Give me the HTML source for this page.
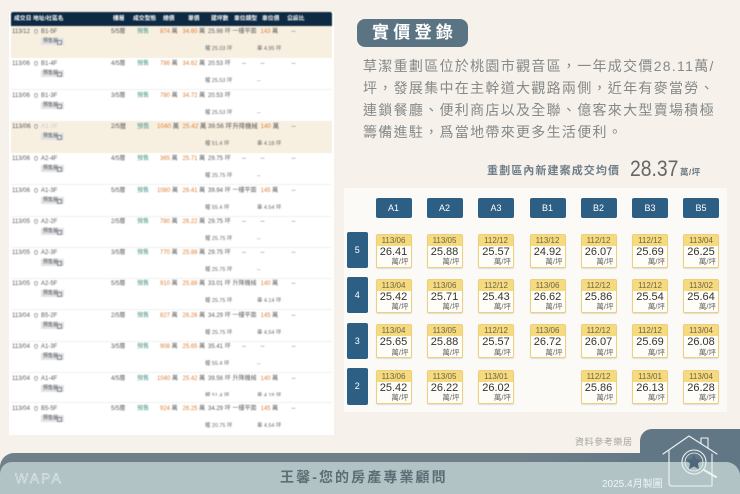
<!DOCTYPE html>
<html lang="zh-Hant"><head><meta charset="utf-8"><title>實價登錄</title>
<style>
*{margin:0;padding:0;box-sizing:border-box}
html,body{width:740px;height:494px;overflow:hidden;background:#f6f1ea;font-family:"Liberation Sans","Noto Sans CJK TC",sans-serif}
#p{position:relative;width:740px;height:494px;overflow:hidden}
#p div,#p span{position:absolute;white-space:nowrap}
.tw{left:9px;top:12px;width:325px;height:423px;background:#fff;filter:blur(.35px)}
.tb{left:11px;top:12px;width:321px;height:423px;overflow:hidden;filter:blur(.4px)}
.h{left:0;top:0;width:321px;height:14px;background:#0e2a42;border-radius:2px 2px 0 0;color:#fff;font-size:5.8px;font-weight:bold;line-height:14px}
.r{left:0;width:321px;height:32px;color:#5c5c5c;font-size:6px;line-height:8px;border-bottom:1px solid #f0f0f0}
.b{background:#f7efe0;border-bottom:0}
.r span{top:2px}
.o{color:#dd8038}.g{color:#4f9a90}
#p .t{left:30px;top:12px!important;width:23px;height:6.5px;background:#dfe2e6;color:#555;font-size:5px;line-height:6.500px;padding-left:2px}
.t:after{content:"";position:absolute;right:2px;top:1.500px;width:3px;height:3px;border:.5px solid #888}
.s{top:19px!important;font-size:5.4px;color:#6c6c6c}
.d{left:1px}.n{left:30px}.f{left:100px}.k{left:126px}.u{left:149px}.u4{left:146px!important}.v{left:171.500px}.a{left:197px}.y{left:221.500px}.q{left:249.500px}.x{left:280.500px}.sa{left:194px}.sb{left:246px}.dash{left:231px!important}
.pin{left:23px;top:3px!important;width:4px;height:5px;border:1px solid #aaa;border-radius:50% 50% 50% 50%/40% 40% 60% 60%}
.pill{left:357px;top:19px;width:111px;height:28px;background:#5b7484;border-radius:8px;color:#fff;font-size:17px;font-weight:bold;line-height:28px;letter-spacing:4.300px;padding-left:15px}
.para{left:363px;top:55px;width:360px;color:#85898a;font-size:14px;line-height:22px;letter-spacing:1.300px}
.para span{position:static!important;display:block}
.st{left:487px;top:164px;font-size:11px;font-weight:bold;color:#6e7d88;letter-spacing:1.100px;line-height:14px}
.pr{left:630px;top:155px;font-size:22px;color:#666;line-height:28px;transform:scaleX(.88);transform-origin:left center}
.un{left:680px;top:166px;font-size:8.500px;font-weight:bold;color:#6e7d88;line-height:12px;letter-spacing:.4px}
.gp{left:344px;top:188px;width:383px;height:224px;background:#fbfaf7}
.ch{top:198px;width:36px;height:20px;background:#2d5f85;border-radius:2px;color:#fff;font-size:9px;line-height:20px;text-align:center}
.rh{left:347px;width:20.500px;background:#2d5f85;border-radius:2px;color:#fff;font-size:9px;text-align:center}
.c{width:36px;height:34px;background:#fffdf8;border:1px solid #edcf80;border-radius:2px;box-shadow:0 1px 1px #ddd}
.c i{position:absolute;left:0;top:0;width:34px;height:11px;background:#f6da7e;font-style:normal;font-size:8px;line-height:11px;text-align:center;color:#6b644a}
.c b{position:absolute;left:0;top:11px;width:34px;font-weight:normal;font-size:11px;line-height:13px;text-align:center;color:#333}
.c u{position:absolute;right:2px;top:22.500px;text-decoration:none;font-size:7.500px;line-height:9px;color:#666}
.src{left:575px;top:436px;font-size:9px;color:#a5a5a3;letter-spacing:.6px;line-height:12px}
.tab{left:640px;top:429px;width:100px;height:40px;background:#627786;border-radius:12px 0 0 0}
.bar{left:0;top:453px;width:740px;height:41px;background:linear-gradient(90deg,#708089,#708089 70%,#627786 87%);border-radius:14px 0 0 0}
.lt{left:0;top:462px;width:740px;height:32px;background:#b2c3c6;border-radius:12px 14px 0 0}
.ft{left:280px;top:468px;font-size:14px;font-weight:bold;color:#5e6c74;letter-spacing:2.100px;line-height:18px}
.wp{left:15px;top:470px;font-size:14px;color:#b2c3c6;-webkit-text-stroke:.4px #eef3f3;letter-spacing:2px;line-height:17px}
.dt{left:602px;top:478px;font-size:10px;color:#f1f5f5;line-height:13px}
svg{position:absolute;left:655px;top:430px}
</style></head><body><div id="p">
<div class="tw"></div>
<div class="tb">
<div class="h"><span style="left:3px">成交日</span><span style="left:22px">地址/社區名</span><span style="left:102px">樓層</span><span style="left:122px">成交型態</span><span style="left:152px">總價</span><span style="left:177px">單價</span><span style="left:200px">建坪數</span><span style="left:223px">車位類型</span><span style="left:251px">車位價</span><span style="left:276px">公設比</span></div>

<div class="r b" style="top:14px"><span class="d">113/12</span><span class="pin"></span><span class="n">B1-5F</span><span class="t">預售屋</span><span class="f">5/5層</span><span class="k g">預售</span><span class="u"><font class="o">874</font> 萬</span><span class="v"><font class="o">34.60</font> 萬</span><span class="a">25.98 坪</span><span class="y">一樓平面</span><span class="q"><font class="o">143</font> 萬</span><span class="x">--</span><span class="s sa">權 25.03 坪</span><span class="s sb">車 4.95 坪</span></div>
<div class="r" style="top:46px"><span class="d">113/06</span><span class="pin"></span><span class="n">B1-4F</span><span class="t">預售屋</span><span class="f">4/5層</span><span class="k g">預售</span><span class="u"><font class="o">786</font> 萬</span><span class="v"><font class="o">34.62</font> 萬</span><span class="a">20.53 坪</span><span class="y dash">--</span><span class="q">--</span><span class="x">--</span><span class="s sa">權 25.53 坪</span><span class="s sb">--</span></div>
<div class="r" style="top:78px"><span class="d">113/06</span><span class="pin"></span><span class="n">B1-3F</span><span class="t">預售屋</span><span class="f">3/5層</span><span class="k g">預售</span><span class="u"><font class="o">780</font> 萬</span><span class="v"><font class="o">34.72</font> 萬</span><span class="a">20.53 坪</span><span class="s sa">權 25.53 坪</span><span class="s sb">--</span></div>
<div class="r b" style="top:109px;color:#555;font-size:6.300px"><span class="d">113/06</span><span class="pin"></span><span class="n" style="color:#ccc">A1-2F</span><span class="t">預售屋</span><span class="f">2/5層</span><span class="k g">預售</span><span class="u u4"><font class="o">1040</font> 萬</span><span class="v"><font class="o">25.42</font> 萬</span><span class="a">39.56 坪</span><span class="y">升降機械</span><span class="q"><font class="o">140</font> 萬</span><span class="x">--</span><span class="s sa">權 51.4 坪</span><span class="s sb">車 4.18 坪</span></div>
<div class="r" style="top:141px"><span class="d">113/06</span><span class="pin"></span><span class="n">A2-4F</span><span class="t">預售屋</span><span class="f">4/5層</span><span class="k g">預售</span><span class="u"><font class="o">365</font> 萬</span><span class="v"><font class="o">25.71</font> 萬</span><span class="a">29.75 坪</span><span class="y dash">--</span><span class="q">--</span><span class="x">--</span><span class="s sa">權 25.75 坪</span><span class="s sb">--</span></div>
<div class="r" style="top:173px"><span class="d">113/06</span><span class="pin"></span><span class="n">A1-3F</span><span class="t">預售屋</span><span class="f">5/5層</span><span class="k g">預售</span><span class="u u4"><font class="o">1080</font> 萬</span><span class="v"><font class="o">26.41</font> 萬</span><span class="a">39.94 坪</span><span class="y">一樓平面</span><span class="q"><font class="o">145</font> 萬</span><span class="x">--</span><span class="s sa">權 55.4 坪</span><span class="s sb">車 4.54 坪</span></div>
<div class="r" style="top:204px"><span class="d">113/05</span><span class="pin"></span><span class="n">A2-2F</span><span class="t">預售屋</span><span class="f">2/5層</span><span class="k g">預售</span><span class="u"><font class="o">780</font> 萬</span><span class="v"><font class="o">26.22</font> 萬</span><span class="a">29.75 坪</span><span class="y dash">--</span><span class="q">--</span><span class="x">--</span><span class="s sa">權 25.75 坪</span><span class="s sb">--</span></div>
<div class="r" style="top:235px"><span class="d">113/05</span><span class="pin"></span><span class="n">A2-3F</span><span class="t">預售屋</span><span class="f">3/5層</span><span class="k g">預售</span><span class="u"><font class="o">770</font> 萬</span><span class="v"><font class="o">25.88</font> 萬</span><span class="a">29.75 坪</span><span class="y dash">--</span><span class="q">--</span><span class="x">--</span><span class="s sa">權 25.75 坪</span><span class="s sb">--</span></div>
<div class="r" style="top:266px"><span class="d">113/05</span><span class="pin"></span><span class="n">A2-5F</span><span class="t">預售屋</span><span class="f">5/5層</span><span class="k g">預售</span><span class="u"><font class="o">910</font> 萬</span><span class="v"><font class="o">25.88</font> 萬</span><span class="a">33.01 坪</span><span class="y">升降機械</span><span class="q"><font class="o">140</font> 萬</span><span class="x">--</span><span class="s sa">權 25.75 坪</span><span class="s sb">車 4.14 坪</span></div>
<div class="r" style="top:298px"><span class="d">113/04</span><span class="pin"></span><span class="n">B5-2F</span><span class="t">預售屋</span><span class="f">2/5層</span><span class="k g">預售</span><span class="u"><font class="o">827</font> 萬</span><span class="v"><font class="o">26.26</font> 萬</span><span class="a">34.29 坪</span><span class="y">一樓平面</span><span class="q"><font class="o">145</font> 萬</span><span class="x">--</span><span class="s sa">權 25.75 坪</span><span class="s sb">車 4.54 坪</span></div>
<div class="r" style="top:329px"><span class="d">113/04</span><span class="pin"></span><span class="n">A1-3F</span><span class="t">預售屋</span><span class="f">3/5層</span><span class="k g">預售</span><span class="u"><font class="o">908</font> 萬</span><span class="v"><font class="o">25.65</font> 萬</span><span class="a">35.41 坪</span><span class="y dash">--</span><span class="q">--</span><span class="x">--</span><span class="s sa">權 55.4 坪</span><span class="s sb">--</span></div>
<div class="r" style="top:361px;height:30px;overflow:hidden"><span class="d">113/04</span><span class="pin"></span><span class="n">A1-4F</span><span class="t">預售屋</span><span class="f">4/5層</span><span class="k g">預售</span><span class="u u4"><font class="o">1040</font> 萬</span><span class="v"><font class="o">25.42</font> 萬</span><span class="a">39.56 坪</span><span class="y">升降機械</span><span class="q"><font class="o">140</font> 萬</span><span class="x">--</span><span class="s sa">權 51.4 坪</span><span class="s sb">車 4.18 坪</span><span style="left:0;top:23px!important;width:321px;height:6px;background:#fff"></span></div>
<div class="r" style="top:391px;border:0"><span class="d">113/04</span><span class="pin"></span><span class="n">B5-5F</span><span class="t">預售屋</span><span class="f">5/5層</span><span class="k g">預售</span><span class="u"><font class="o">924</font> 萬</span><span class="v"><font class="o">26.25</font> 萬</span><span class="a">34.29 坪</span><span class="y">一樓平面</span><span class="q"><font class="o">145</font> 萬</span><span class="x">--</span><span class="s sa">權 20.75 坪</span><span class="s sb">車 4.54 坪</span></div>
</div>

<div class="pill">實價登錄</div>
<div class="para"><span>草潔重劃區位於桃園市觀音區，一年成交價28.11萬/</span><span>坪，發展集中在主幹道大觀路兩側，近年有麥當勞、</span><span>連鎖餐廳、便利商店以及全聯、億客來大型賣場積極</span><span>籌備進駐，爲當地帶來更多生活便利。</span></div>
<div class="st">重劃區內新建案成交均價</div><div class="pr">28.37</div><div class="un">萬/坪</div>

<div class="gp"></div>
<div class="ch" style="left:375.500px">A1</div><div class="ch" style="left:426.500px">A2</div><div class="ch" style="left:478px">A3</div><div class="ch" style="left:529.500px">B1</div><div class="ch" style="left:580.500px">B2</div><div class="ch" style="left:632px">B3</div><div class="ch" style="left:683px">B5</div>
<div class="rh" style="top:232px;height:36px;line-height:36px">5</div><div class="rh" style="top:277px;height:36px;line-height:36px">4</div><div class="rh" style="top:322.500px;height:36.500px;line-height:36px">3</div><div class="rh" style="top:368px;height:37px;line-height:37px">2</div>

<div class="c" style="left:375.500px;top:233.500px"><i>113/06</i><b>26.41</b><u>萬/坪</u></div>
<div class="c" style="left:426.500px;top:233.500px"><i>113/05</i><b>25.88</b><u>萬/坪</u></div>
<div class="c" style="left:478px;top:233.500px"><i>112/12</i><b>25.57</b><u>萬/坪</u></div>
<div class="c" style="left:529.500px;top:233.500px"><i>113/12</i><b>24.92</b><u>萬/坪</u></div>
<div class="c" style="left:580.500px;top:233.500px"><i>112/12</i><b>26.07</b><u>萬/坪</u></div>
<div class="c" style="left:632px;top:233.500px"><i>112/12</i><b>25.69</b><u>萬/坪</u></div>
<div class="c" style="left:683px;top:233.500px"><i>113/04</i><b>26.25</b><u>萬/坪</u></div>

<div class="c" style="left:375.500px;top:278.500px"><i>113/04</i><b>25.42</b><u>萬/坪</u></div>
<div class="c" style="left:426.500px;top:278.500px"><i>113/06</i><b>25.71</b><u>萬/坪</u></div>
<div class="c" style="left:478px;top:278.500px"><i>112/12</i><b>25.43</b><u>萬/坪</u></div>
<div class="c" style="left:529.500px;top:278.500px"><i>113/06</i><b>26.62</b><u>萬/坪</u></div>
<div class="c" style="left:580.500px;top:278.500px"><i>112/12</i><b>25.86</b><u>萬/坪</u></div>
<div class="c" style="left:632px;top:278.500px"><i>112/12</i><b>25.54</b><u>萬/坪</u></div>
<div class="c" style="left:683px;top:278.500px"><i>113/02</i><b>25.64</b><u>萬/坪</u></div>

<div class="c" style="left:375.500px;top:324px"><i>113/04</i><b>25.65</b><u>萬/坪</u></div>
<div class="c" style="left:426.500px;top:324px"><i>113/05</i><b>25.88</b><u>萬/坪</u></div>
<div class="c" style="left:478px;top:324px"><i>112/12</i><b>25.57</b><u>萬/坪</u></div>
<div class="c" style="left:529.500px;top:324px"><i>113/06</i><b>26.72</b><u>萬/坪</u></div>
<div class="c" style="left:580.500px;top:324px"><i>112/12</i><b>26.07</b><u>萬/坪</u></div>
<div class="c" style="left:632px;top:324px"><i>112/12</i><b>25.69</b><u>萬/坪</u></div>
<div class="c" style="left:683px;top:324px"><i>113/04</i><b>26.08</b><u>萬/坪</u></div>

<div class="c" style="left:375.500px;top:369.500px"><i>113/06</i><b>25.42</b><u>萬/坪</u></div>
<div class="c" style="left:426.500px;top:369.500px"><i>113/05</i><b>26.22</b><u>萬/坪</u></div>
<div class="c" style="left:478px;top:369.500px"><i>113/01</i><b>26.02</b><u>萬/坪</u></div>
<div class="c" style="left:580.500px;top:369.500px"><i>112/12</i><b>25.86</b><u>萬/坪</u></div>
<div class="c" style="left:632px;top:369.500px"><i>113/01</i><b>26.13</b><u>萬/坪</u></div>
<div class="c" style="left:683px;top:369.500px"><i>113/04</i><b>26.28</b><u>萬/坪</u></div>

<div class="src">資料參考樂居</div>
<div class="tab"></div><div class="bar"></div><div class="lt"></div>
<div class="wp">WAPA</div><div class="ft">王馨-您的房產專業顧問</div><div class="dt">2025.4月製圖</div>

<svg width="72" height="62" viewBox="0 0 72 62" fill="none" stroke="#eef3f3" stroke-width="1.1" stroke-linejoin="round" stroke-linecap="round">
<path d="M8 24 34 6 62 24"/><path d="M46 13V8h7v10"/>
<path d="M14 21V53q0 3 3 3H57V24"/>
<circle cx="39" cy="32" r="12"/><circle cx="39" cy="32" r="9" stroke-width=".8"/>
<path d="M49 40 61 47" stroke-width="2"/>
<path d="M39 25 41 29.500 46 30 42.500 33.500 43.500 38.500 39 36 34.500 38.500 35.500 33.500 32 30 37 29.500Z" fill="#4f6779" stroke="#4f6779" stroke-width=".8"/>
</svg>
</div></body></html>
